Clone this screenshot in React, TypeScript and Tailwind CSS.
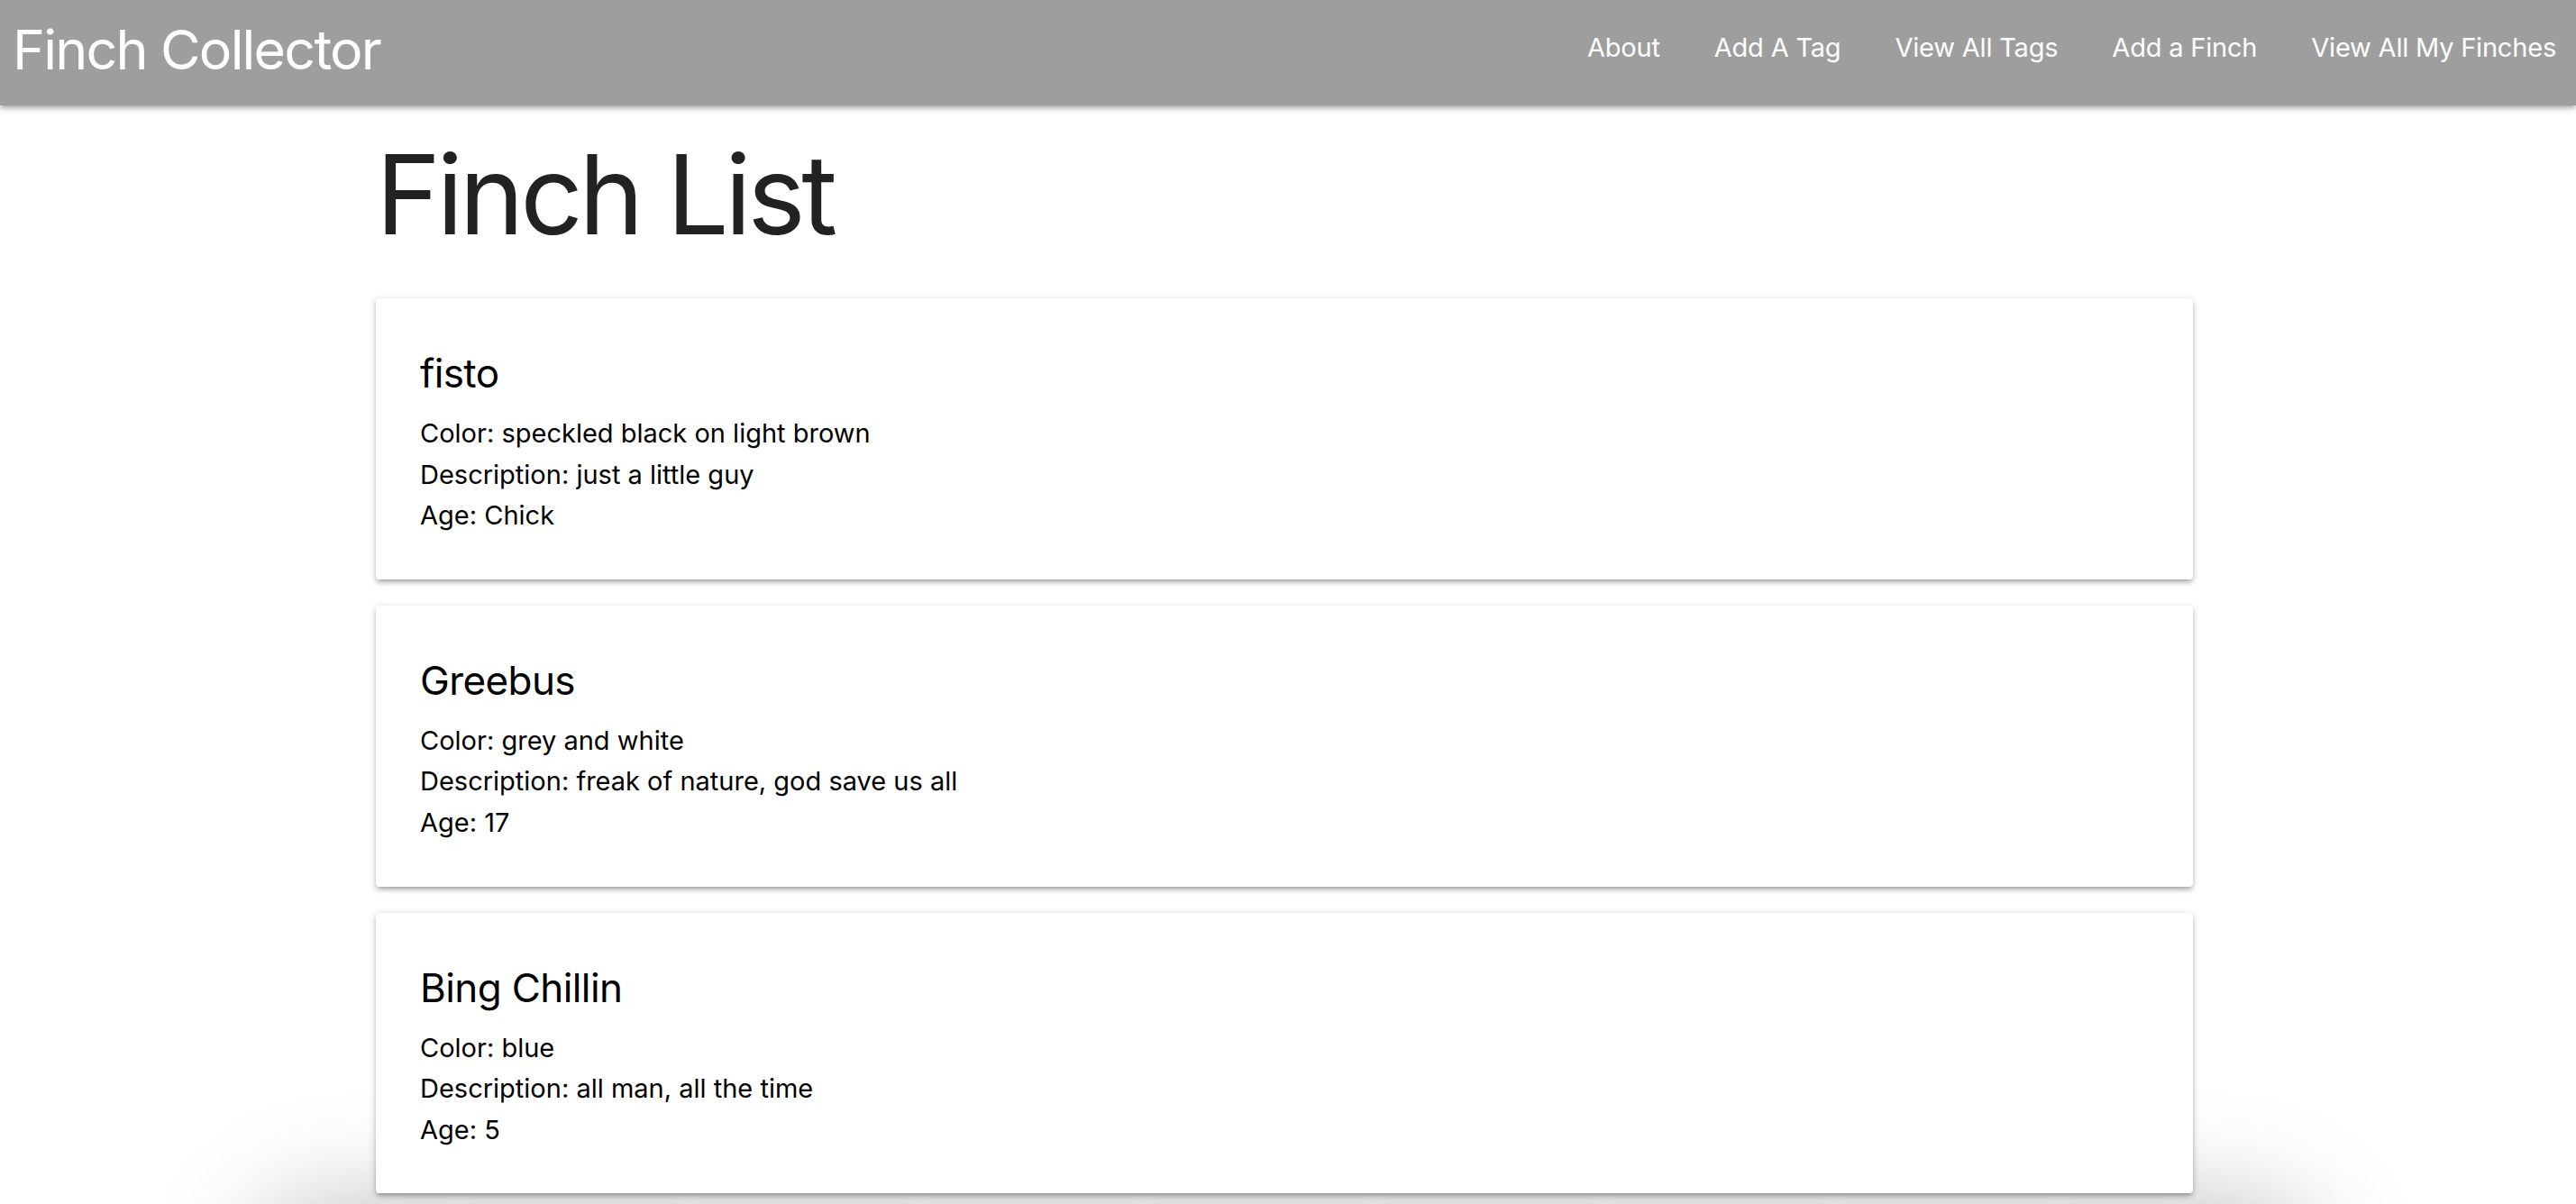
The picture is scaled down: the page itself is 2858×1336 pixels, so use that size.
const finches = [
    { id: 1, name: "fisto", color: "speckled black on light brown", description: "just a little guy", age: "Chick" },
    { id: 2, name: "Greebus", color: "grey and white", description: "freak of nature, god save us all", age: "17" },
    { id: 3, name: "Bing Chillin", color: "blue", description: "all man, all the time", age: "5" },
]

const links = ["About", "Add A Tag", "View All Tags", "Add a Finch", "View All My Finches"]

const FinchCard = ({ finch }: { finch: (typeof finches)[number] }) => {
    return (
        <div className="rounded-[4px] bg-white px-[49px] pt-[54px] pb-[48px] shadow-[0_4px_4px_0_rgba(0,0,0,0.14),0_5px_2px_-4px_rgba(0,0,0,0.12),0_2px_9px_0_rgba(0,0,0,0.2)]">
            <div className="mb-[15px] text-[44px] leading-[58px] tracking-[-0.6px] text-black">{finch.name}</div>
            <p className="text-[29px] leading-[45.6px] text-black">Color: {finch.color}</p>
            <p className="text-[29px] leading-[45.6px] text-black">Description: {finch.description}</p>
            <p className="text-[29px] leading-[45.6px] text-black">Age: {finch.age}</p>
        </div>
    )
}

export default function App() {
    return (
        <div className="min-h-screen overflow-hidden bg-white font-['Inter','Roboto',sans-serif]">
            <nav className="relative z-10 flex h-[117px] items-center justify-between bg-[#9e9e9e] shadow-[0_4px_4px_0_rgba(0,0,0,0.14),0_5px_2px_-4px_rgba(0,0,0,0.12),0_2px_9px_0_rgba(0,0,0,0.2)]">
                <a className="pl-[14px] pb-[7px] text-[61px] leading-[110px] tracking-[-1.8px] text-white">Finch Collector</a>
                <ul className="flex gap-[60px] pr-[22px] pb-[12px]">
                    {links.map((link) => (
                        <li key={link}>
                            <a className="text-[29px] tracking-[-0.2px] text-white">{link}</a>
                        </li>
                    ))}
                </ul>
            </nav>

            <div className="ml-[417px] w-[2016px]">
                <h1 className="mt-[32px] mb-[48px] text-[122px] leading-[134px] tracking-[-4.5px] text-[#222222]">Finch List</h1>
                <div className="flex flex-col gap-[29px]">
                    {finches.map((finch) => (
                        <FinchCard key={finch.id} finch={finch} />
                    ))}
                </div>
            </div>

            <footer className="ml-[300px] mt-[29px] h-[200px] w-[2250px] rounded-[60px] bg-white shadow-[0_0_120px_16px_rgba(0,0,0,0.26)]" />
        </div>
    )
}
